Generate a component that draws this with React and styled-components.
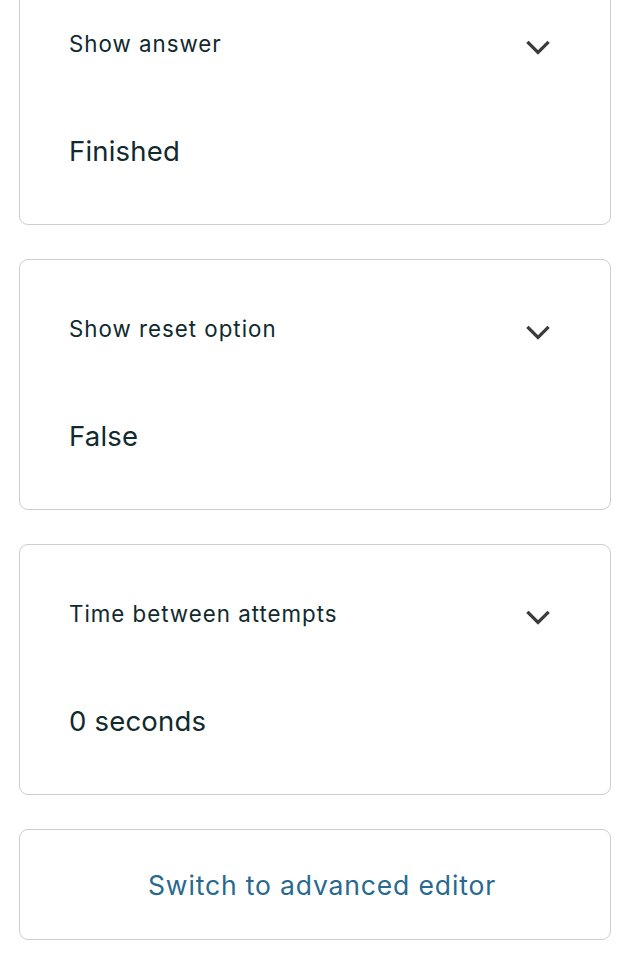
import React from "react";
import styled, { createGlobalStyle } from "styled-components";

const Global = createGlobalStyle`
  html, body { margin: 0; padding: 0; background: #ffffff; }
  body { font-family: Inter, "Noto Sans", "Liberation Sans", sans-serif; overflow: hidden; }
`;

const Page = styled.div`
  display: flex;
  flex-direction: column;
  gap: 34px;
  padding: 0 23px 0 19px;
  margin-top: -26px;
`;

const Card = styled.section`
  border: 1.5px solid #d1cdca;
  border-radius: 9px;
  padding: 52px 60px 53px 49px;
  display: flex;
  flex-direction: column;
  gap: 70px;
  background: #fff;
`;

const Header = styled.div`
  display: flex;
  align-items: center;
  justify-content: space-between;
  height: 34px;
`;

const Title = styled.span`
  font-size: 22.3px;
  color: #102a2e;
  line-height: 34px;
  letter-spacing: 1px;
`;

const Value = styled.div`
  font-size: 27.5px;
  color: #102a2e;
  line-height: 40px;
  letter-spacing: 0.2px;
`;

const Chevron = styled.svg`
  width: 24px;
  height: 16px;
  margin-top: 7px;
  flex: none;
`;

const SwitchButton = styled.button`
  border: 1.5px solid #d1cdca;
  border-radius: 9px;
  background: #fff;
  height: 111px;
  font-family: inherit;
  font-size: 26.5px;
  letter-spacing: 0.85px;
  color: #27698f;
  cursor: pointer;
  padding: 0 0 0 14px;
`;

const Down = () => (
  <Chevron viewBox="0 0 24 16" fill="none">
    <polyline points="2.5,3 12,12.5 21.5,3" stroke="#3b3b3b" strokeWidth="3.2" strokeLinecap="square" strokeLinejoin="miter" />
  </Chevron>
);

const items = [
  { title: "Show answer", value: "Finished" },
  { title: "Show reset option", value: "False" },
  { title: "Time between attempts", value: "0 seconds" },
];

export default function App() {
  return (
    <>
      <Global />
      <Page>
        {items.map((it) => (
          <Card key={it.title}>
            <Header>
              <Title>{it.title}</Title>
              <Down />
            </Header>
            <Value>{it.value}</Value>
          </Card>
        ))}
        <SwitchButton>Switch to advanced editor</SwitchButton>
      </Page>
    </>
  );
}
